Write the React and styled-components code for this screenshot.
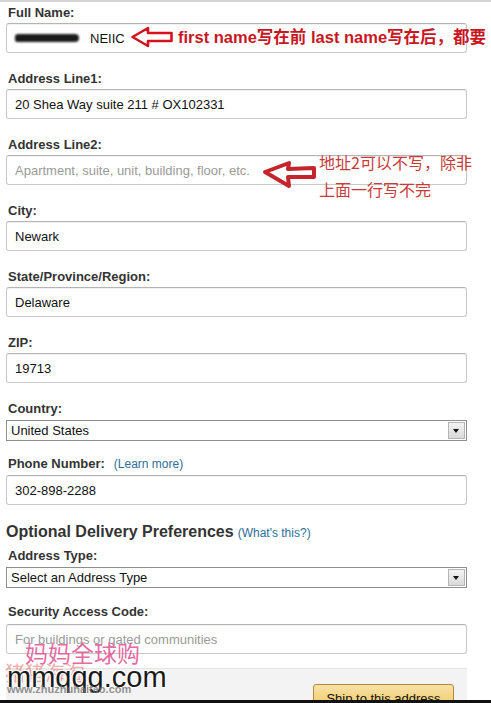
import React from "react";
import styled, { createGlobalStyle } from "styled-components";

const GlobalStyle = createGlobalStyle`
  html, body {
    margin: 0;
    padding: 0;
    background: #fff;
    overflow: hidden;
  }
  body {
    font-family: "Liberation Sans", Arial, "Noto Sans CJK SC", sans-serif;
  }
`;

const textFields = [
  { label: "Address Line1:", value: "20 Shea Way suite 211 # OX102331" },
];

const LeftArrow = ({ width, height, stroke, strokeWidth, d }) => (
  <svg width={width} height={height} viewBox={`0 0 ${width} ${height}`}>
    <path
      d={d}
      fill="#fff"
      stroke={stroke}
      strokeWidth={strokeWidth}
      strokeLinejoin="round"
    />
  </svg>
);

const App = () => {
  return (
    <Frame>
      <GlobalStyle />
      <Viewport>
        <Form>
          <Field>
            <Label>Full Name:</Label>
            <InputWrap>
              <TextBox>
                <Redacted />
                NEIIC
              </TextBox>
              <NoteOne>
                <LeftArrow
                  width={44}
                  height={22}
                  stroke="#d3141c"
                  strokeWidth={2.6}
                  d="M2.5 11 L18 2 L18 7 L41.5 7 L41.5 15 L18 15 L18 20 Z"
                />
                <BoldNote>first name写在前 last name写在后，都要</BoldNote>
              </NoteOne>
            </InputWrap>
          </Field>

          {textFields.map((f) => (
            <Field key={f.label}>
              <Label>{f.label}</Label>
              <TextBox>{f.value}</TextBox>
            </Field>
          ))}

          <Field>
            <Label>Address Line2:</Label>
            <InputWrap>
              <TextBox $placeholder>Apartment, suite, unit, building, floor, etc.</TextBox>
              <NoteTwo>
                <ArrowTwo>
                  <LeftArrow
                    width={56}
                    height={30}
                    stroke="#c4242b"
                    strokeWidth={4}
                    d="M3 13 L27 4 L26 10 L52 9 L52 18 L26 18 L27 27 Z"
                  />
                </ArrowTwo>
                <PlainNote>
                  地址2可以不写，除非
                  <br />
                  上面一行写不完
                </PlainNote>
              </NoteTwo>
            </InputWrap>
          </Field>

          <Field>
            <Label>City:</Label>
            <TextBox>Newark</TextBox>
          </Field>
          <Field>
            <Label>State/Province/Region:</Label>
            <TextBox>Delaware</TextBox>
          </Field>
          <Field>
            <Label>ZIP:</Label>
            <TextBox>19713</TextBox>
          </Field>

          <Field $gap={14}>
            <Label $mb={3}>Country:</Label>
            <SelectBox>
              <span>United States</span>
              <DropButton />
            </SelectBox>
          </Field>

          <Field $gap={17}>
            <Label $mb={3}>
              Phone Number:<Link>(Learn more)</Link>
            </Label>
            <TextBox>302-898-2288</TextBox>
          </Field>

          <Heading>
            Optional Delivery Preferences<Link $heading>(What&apos;s this?)</Link>
          </Heading>

          <Field $gap={15}>
            <Label $mb={3}>Address Type:</Label>
            <SelectBox>
              <span>Select an Address Type</span>
              <DropButton />
            </SelectBox>
          </Field>

          <Field $gap={14}>
            <Label $mb={4}>Security Access Code:</Label>
            <TextBox $placeholder>For buildings or gated communities</TextBox>
          </Field>
        </Form>

        <ActionPanel>
          <ShipButton>Ship to this address</ShipButton>
        </ActionPanel>

        <Watermark>
          <WmPink>妈妈全球购</WmPink>
          <WmRed>猪猪海淘</WmRed>
          <WmBig>mmqqg.com</WmBig>
          <WmSmall>www.zhuzhuhaitao.com</WmSmall>
        </Watermark>
      </Viewport>
      <BottomBar />
    </Frame>
  );
};

export default App;

const Frame = styled.div`
  display: flex;
  flex-direction: column;
  width: 491px;
  height: 703px;
  overflow: hidden;
`;

const Viewport = styled.div`
  position: relative;
  flex: 1;
  overflow: hidden;
  border-top: 2px solid #d4d4d4;
`;

const Form = styled.div`
  display: flex;
  flex-direction: column;
  padding: 2px 0 0 6px;
  width: 461px;
`;

const Field = styled.div`
  display: flex;
  flex-direction: column;
  margin-bottom: ${(p) => (p.$gap != null ? p.$gap : 17)}px;
`;

const Label = styled.div`
  display: flex;
  align-items: baseline;
  padding-left: 2px;
  height: 17px;
  line-height: 17px;
  margin-bottom: ${(p) => (p.$mb != null ? p.$mb : 2)}px;
  font-size: 13px;
  font-weight: bold;
  color: #333;
`;

const Link = styled.span`
  margin-left: ${(p) => (p.$heading ? 4 : 9)}px;
  font-size: 12px;
  font-weight: normal;
  color: #2f6e9a;
`;

const InputWrap = styled.div`
  position: relative;
`;

const TextBox = styled.div`
  box-sizing: border-box;
  display: flex;
  align-items: center;
  height: 30px;
  padding: 0 8px;
  border: 1px solid #c8c8c8;
  border-top-color: #b4b4b4;
  border-radius: 3px;
  box-shadow: inset 0 1px 1px rgba(0, 0, 0, 0.06);
  background: #fff;
  font-size: 13px;
  color: ${(p) => (p.$placeholder ? "#9a9a9a" : "#111")};
  white-space: nowrap;
`;

const Redacted = styled.span`
  display: inline-block;
  width: 64px;
  height: 8px;
  margin-right: 11px;
  border-radius: 3px 4px 4px 2px;
  background: #1a1a1a;
  filter: blur(1px);
`;

const NoteOne = styled.div`
  position: absolute;
  left: 124px;
  top: 3px;
  display: flex;
  align-items: center;
  gap: 4px;
  white-space: nowrap;
`;

const BoldNote = styled.span`
  font-family: "Liberation Sans", Arial, "Noto Sans CJK SC", sans-serif;
  font-size: 16.5px;
  font-weight: bold;
  color: #c9161f;
  margin-top: -3px;
`;

const NoteTwo = styled.div`
  position: absolute;
  left: 256px;
  top: -6px;
  display: flex;
  align-items: flex-start;
  white-space: nowrap;
`;

const ArrowTwo = styled.div`
  margin-top: 10px;
  margin-right: 1px;
`;

const PlainNote = styled.div`
  font-family: "Noto Sans CJK SC", sans-serif;
  font-size: 16px;
  line-height: 27px;
  color: #c93a3a;
`;

const SelectBox = styled.div`
  box-sizing: border-box;
  display: flex;
  align-items: center;
  justify-content: space-between;
  height: 21px;
  padding: 0 1px 0 4px;
  border: 1px solid #8e8e8e;
  background: #fff;
  font-size: 13px;
  color: #111;
`;

const DropButton = styled.div`
  box-sizing: border-box;
  position: relative;
  width: 17px;
  height: 17px;
  border: 1px solid #b5b5b5;
  background: linear-gradient(#f4f4f4, #d9d9d9);

  &::after {
    content: "";
    position: absolute;
    left: 4px;
    top: 6px;
    border-left: 3.5px solid transparent;
    border-right: 3.5px solid transparent;
    border-top: 4px solid #111;
  }
`;

const Heading = styled.div`
  display: flex;
  align-items: baseline;
  height: 20px;
  line-height: 20px;
  margin-bottom: 5px;
  font-size: 16px;
  font-weight: bold;
  color: #333;
`;

const ActionPanel = styled.div`
  display: flex;
  justify-content: flex-end;
  width: 461px;
  margin-left: 6px;
  padding: 15px 13px 0 0;
  box-sizing: border-box;
  height: 60px;
  background: #f3f3f3;
  border-top: 1px solid #e4e4e4;
`;

const ShipButton = styled.div`
  box-sizing: border-box;
  width: 141px;
  height: 29px;
  display: flex;
  align-items: center;
  justify-content: center;
  border: 1px solid #b18b3a;
  border-radius: 3px;
  background: linear-gradient(#f8e2a8, #f0c459);
  font-size: 13px;
  color: #111;
`;

const Watermark = styled.div`
  position: absolute;
  left: 5px;
  top: 637px;
  width: 170px;
  height: 62px;
  pointer-events: none;
`;

const WmPink = styled.div`
  position: absolute;
  left: 20px;
  top: 0;
  font-family: "Noto Sans CJK SC", sans-serif;
  font-size: 23px;
  line-height: 26px;
  color: rgba(226, 88, 150, 0.9);
`;

const WmRed = styled.div`
  position: absolute;
  left: 0;
  top: 22px;
  font-family: "Noto Sans CJK SC", sans-serif;
  font-size: 20px;
  line-height: 24px;
  color: rgba(220, 70, 70, 0.45);
`;

const WmBig = styled.div`
  position: absolute;
  left: 2px;
  top: 22px;
  font-family: "Liberation Sans", Arial, sans-serif;
  font-size: 29px;
  line-height: 32px;
  color: #1a1a1a;
  text-shadow: 1px 1px 0 #fff, -1px -1px 0 #fff, 1px -1px 0 #fff,
    -1px 1px 0 #fff;
`;

const WmSmall = styled.div`
  position: absolute;
  left: 2px;
  top: 44px;
  font-family: "Liberation Sans", Arial, sans-serif;
  font-size: 11px;
  font-weight: bold;
  color: rgba(110, 110, 110, 0.75);
`;

const BottomBar = styled.div`
  height: 3px;
  background: #111;
`;
